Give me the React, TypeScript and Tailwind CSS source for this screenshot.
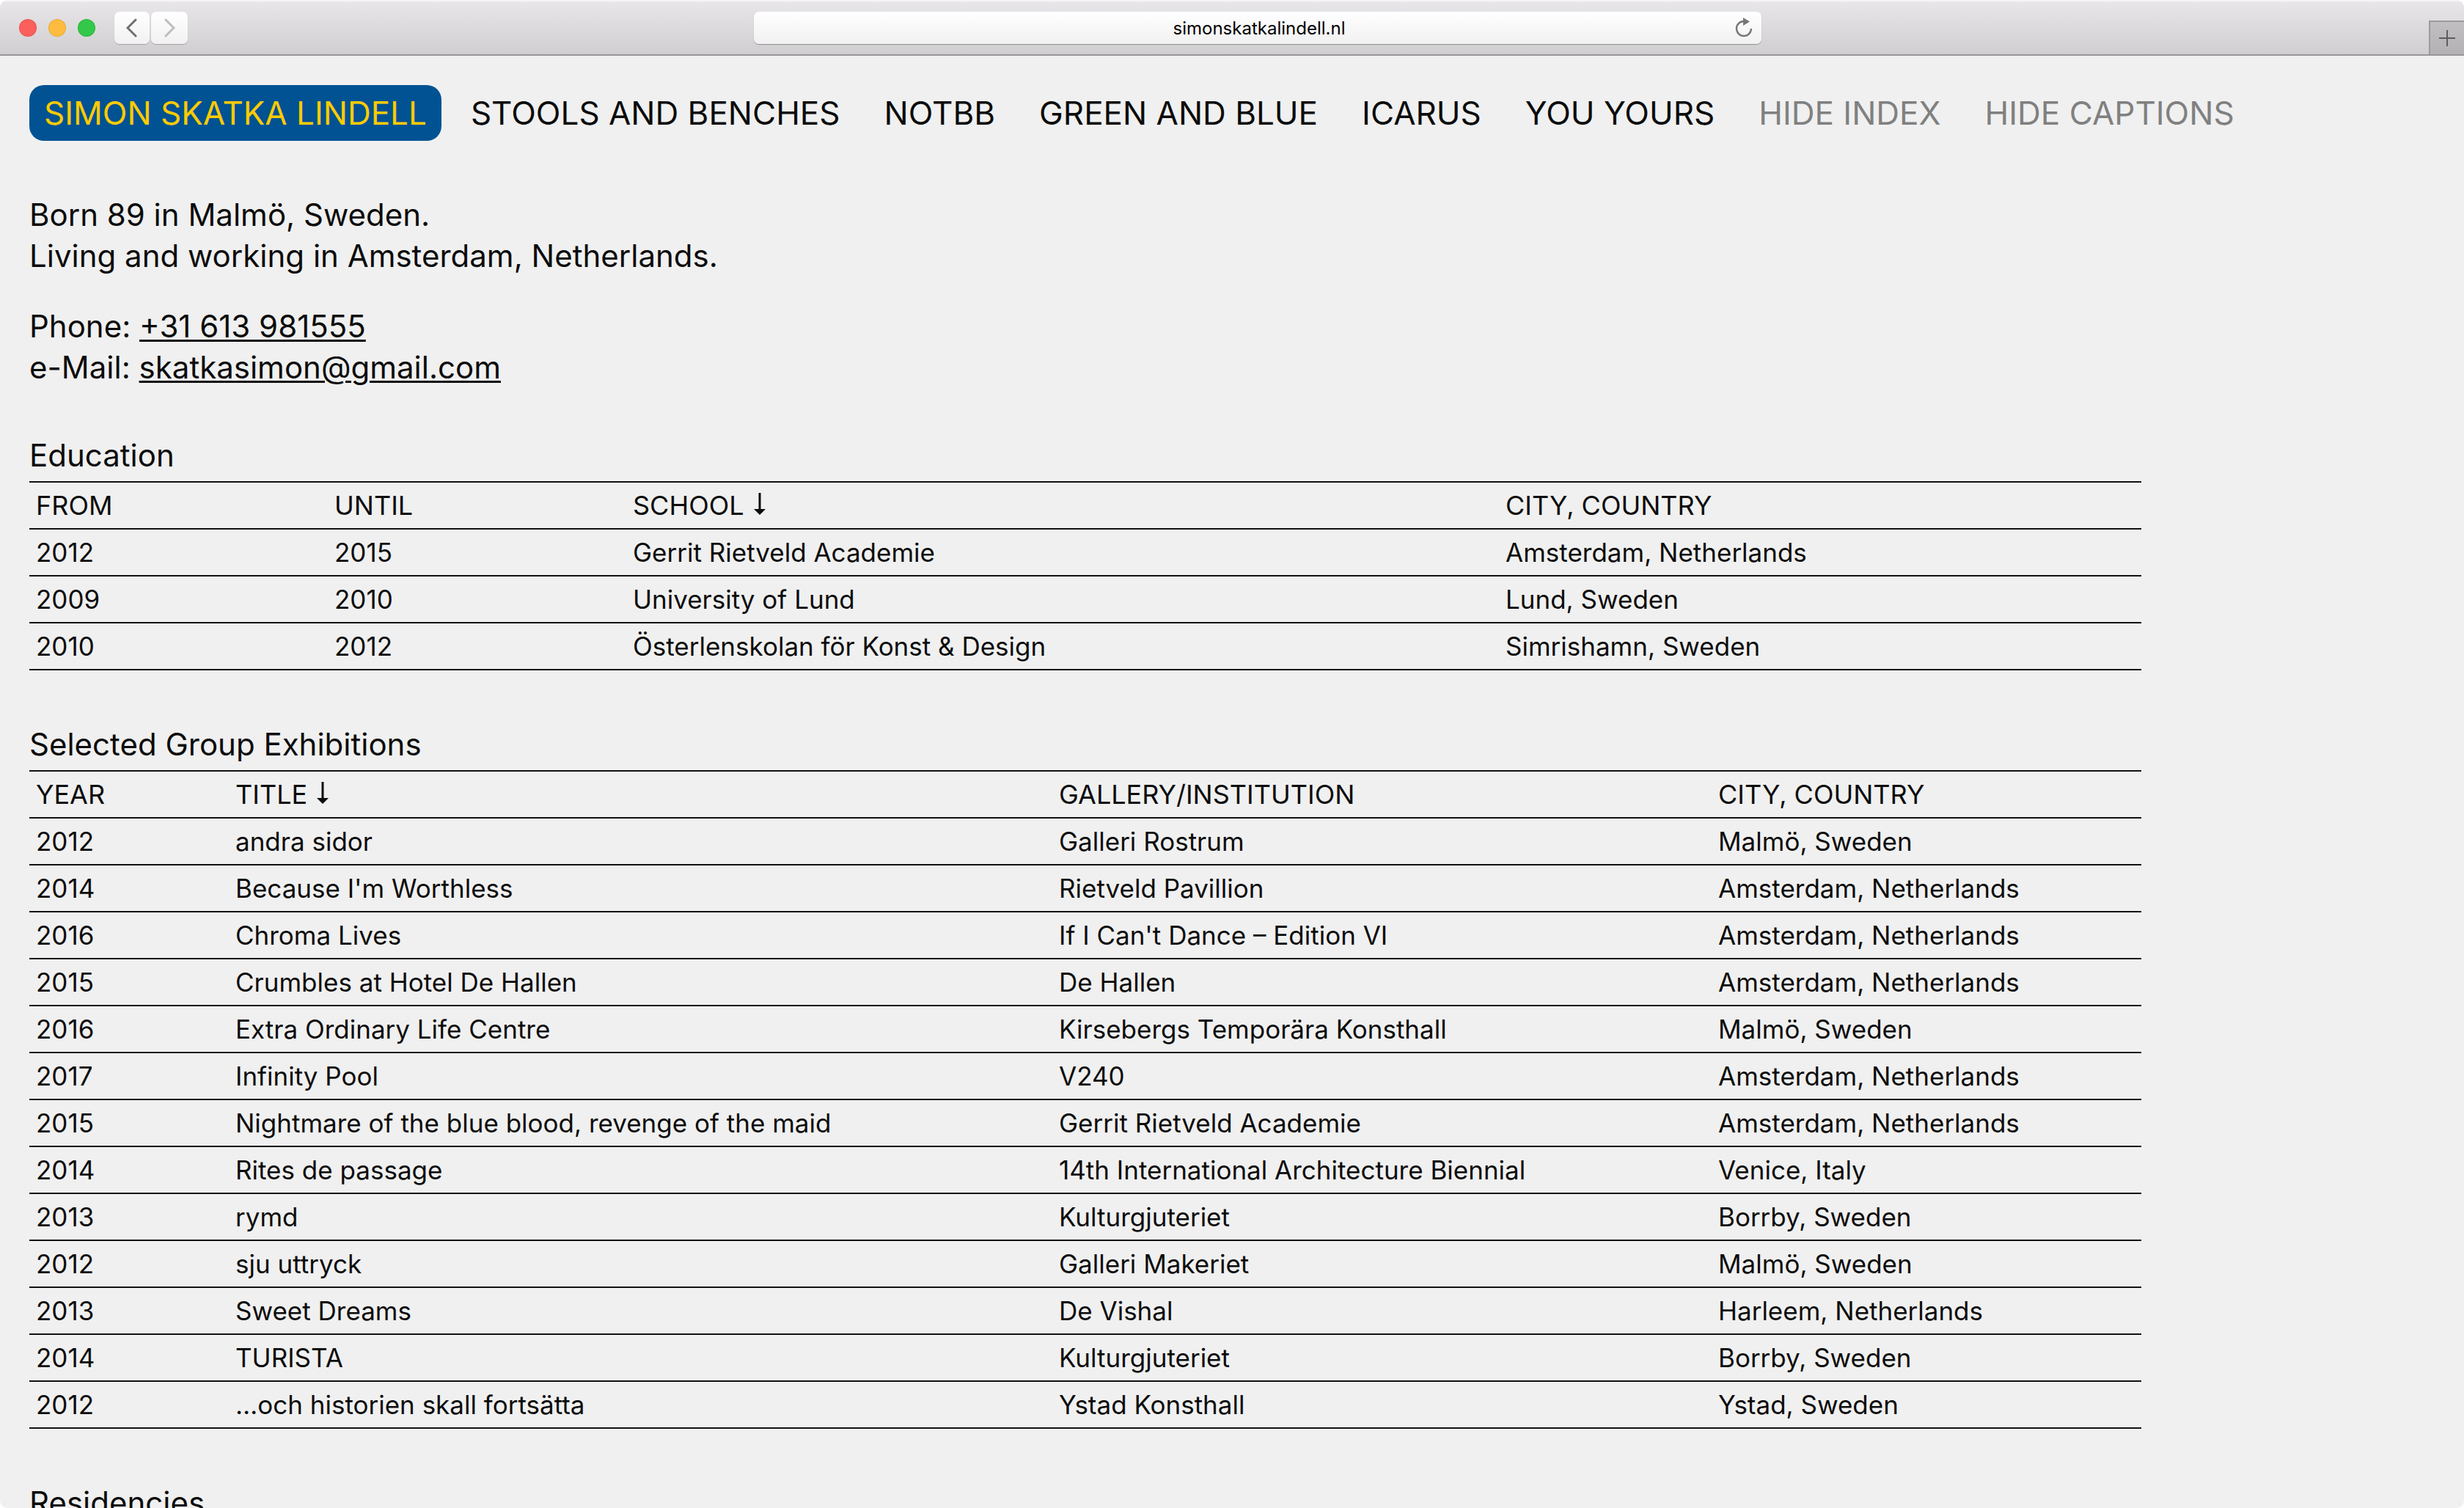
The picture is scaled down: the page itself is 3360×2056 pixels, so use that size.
import React from "react";

const nav = ["STOOLS AND BENCHES", "NOTBB", "GREEN AND BLUE", "ICARUS", "YOU YOURS"];
const toggles = ["HIDE INDEX", "HIDE CAPTIONS"];

const education = [
  ["2012", "2015", "Gerrit Rietveld Academie", "Amsterdam, Netherlands"],
  ["2009", "2010", "University of Lund", "Lund, Sweden"],
  ["2010", "2012", "Österlenskolan för Konst & Design", "Simrishamn, Sweden"],
];

const exhibitions = [
  ["2012", "andra sidor", "Galleri Rostrum", "Malmö, Sweden"],
  ["2014", "Because I'm Worthless", "Rietveld Pavillion", "Amsterdam, Netherlands"],
  ["2016", "Chroma Lives", "If I Can't Dance – Edition VI", "Amsterdam, Netherlands"],
  ["2015", "Crumbles at Hotel De Hallen", "De Hallen", "Amsterdam, Netherlands"],
  ["2016", "Extra Ordinary Life Centre", "Kirsebergs Temporära Konsthall", "Malmö, Sweden"],
  ["2017", "Infinity Pool", "V240", "Amsterdam, Netherlands"],
  ["2015", "Nightmare of the blue blood, revenge of the maid", "Gerrit Rietveld Academie", "Amsterdam, Netherlands"],
  ["2014", "Rites de passage", "14th International Architecture Biennial", "Venice, Italy"],
  ["2013", "rymd", "Kulturgjuteriet", "Borrby, Sweden"],
  ["2012", "sju uttryck", "Galleri Makeriet", "Malmö, Sweden"],
  ["2013", "Sweet Dreams", "De Vishal", "Harleem, Netherlands"],
  ["2014", "TURISTA", "Kulturgjuteriet", "Borrby, Sweden"],
  ["2012", "…och historien skall fortsätta", "Ystad Konsthall", "Ystad, Sweden"],
];

function BrowserBar() {
  return (
    <header className="grid h-[76px] grid-cols-[1028fr_1374px_958fr] items-center border-b-2 border-[#989698] bg-linear-to-b from-[#e9e7ea] to-[#d0ced0] pt-[2px] shadow-[inset_0_2px_0_#f5f4f5]">
      <div className="flex items-center pl-[26px]">
        <div className="flex gap-4">
          <button aria-label="Close" className="size-6 rounded-full border border-[#e0443e]/60 bg-[#fc605c]" />
          <button aria-label="Minimize" className="size-6 rounded-full border border-[#dea123]/60 bg-[#fdbc40]" />
          <button aria-label="Zoom" className="size-6 rounded-full border border-[#1aab29]/60 bg-[#34c84a]" />
        </div>
        <div className="ml-[26px] flex gap-[2px]">
          <button aria-label="Back" className="flex h-11 w-12 items-center justify-center rounded-[7px] bg-linear-to-b from-white to-[#f1f1f1] text-[#6f6f6f] shadow-[0_1px_1px_#a3a1a3]">
            <svg width="16" height="26" viewBox="0 0 16 26" fill="none" stroke="currentColor" strokeWidth="3" strokeLinecap="round"><path d="M13 2 2 13l11 11" /></svg>
          </button>
          <button aria-label="Forward" className="flex h-11 w-[50px] items-center justify-center rounded-[7px] bg-linear-to-b from-white to-[#f1f1f1] text-[#bdbdbd] shadow-[0_1px_1px_#a3a1a3]">
            <svg width="16" height="26" viewBox="0 0 16 26" fill="none" stroke="currentColor" strokeWidth="3" strokeLinecap="round"><path d="m3 2 11 11L3 24" /></svg>
          </button>
        </div>
      </div>
      <div className="flex h-11 items-center rounded-[7px] bg-linear-to-b from-white to-[#f1f1f1] pr-3 pl-10 shadow-[0_1px_1px_#8f8d8f]">
        <input aria-label="Address" defaultValue="simonskatkalindell.nl" className="min-w-0 flex-1 bg-transparent pt-[2px] text-center font-[Inter,sans-serif] text-[24px] leading-8 text-black outline-none" />
        <button aria-label="Reload" className="text-[#777]">
          <svg width="24" height="28" viewBox="0 0 24 28" fill="none" stroke="currentColor" strokeWidth="2.4"><path d="M12 5a10 10 0 1 0 10 10" /><path d="M11 0v11l9-5.5z" fill="currentColor" stroke="none" /></svg>
        </button>
      </div>
      <div className="flex justify-end self-end">
        <button aria-label="New tab" className="flex h-[46px] w-12 items-center justify-center border-t-2 border-l-2 border-[#9c9a9c] bg-linear-to-b from-[#c1bfc1] to-[#b3b1b3] text-[#5d5d5d]">
          <svg width="22" height="22" viewBox="0 0 22 22" stroke="currentColor" strokeWidth="2"><path d="M11 0v22M0 11h22" /></svg>
        </button>
      </div>
    </header>
  );
}

function SortArrow() {
  return (
    <svg className="ml-3 inline-block align-baseline" width="18" height="30" viewBox="0 0 18 30" aria-label="sorted">
      <path d="M9 0v24" stroke="currentColor" strokeWidth="3" />
      <path d="M1 22h16L9 30z" fill="currentColor" />
    </svg>
  );
}

function Listing({ title, heads, sorted, widths, rows }: { title: string; heads: string[]; sorted: number; widths: string[]; rows: string[][] }) {
  return (
    <table className="mb-[73px] w-full table-fixed border-collapse text-left text-[35px] leading-[46px]">
      <caption className="h-[63px] text-left text-[42px] leading-[56px]">{title}</caption>
      <colgroup>{widths.map((w, i) => <col key={i} className={w} />)}</colgroup>
      <thead>
        <tr className="h-16 border-y-2 border-[#111] text-[36px]">
          {heads.map((h, i) => (
            <th key={h} scope="col" className="px-[9px] py-0 font-normal">
              {i === sorted ? <button>{h}<SortArrow /></button> : h}
            </th>
          ))}
        </tr>
      </thead>
      <tbody>
        {rows.map((r, i) => (
          <tr key={i} className="h-16 border-b-2 border-[#111]">
            {r.map((c, j) => <td key={j} className="px-[9px] py-0 whitespace-nowrap">{c}</td>)}
          </tr>
        ))}
      </tbody>
    </table>
  );
}

export default function App() {
  return (
    <div className="bg-white">
      <div className="h-screen overflow-hidden rounded-[10px] bg-[#f0f0f0] font-[Inter,sans-serif] text-[#0c0c0c]">
        <BrowserBar />
        <nav className="flex items-center gap-[60px] px-10 pt-10 text-[44px] leading-[76px] whitespace-nowrap">
          <a href="#" className="-mr-5 rounded-[20px] bg-[#005293] px-5 text-[#fecb00]">SIMON SKATKA LINDELL</a>
          {nav.map((n) => <a key={n} href="#">{n}</a>)}
          {toggles.map((n) => <button key={n} className="text-[#808080]">{n}</button>)}
        </nav>
        <main className="w-10/12 pt-[73px] pl-10">
          <div className="text-[42px] leading-[56px]">
            <p>Born 89 in Malmö, Sweden.<br />Living and working in Amsterdam, Netherlands.</p>
            <p className="mt-10">
              Phone: <a href="tel:+31613981555" className="underline decoration-[3px] underline-offset-[3px]">+31 613 981555</a><br />
              e-Mail: <a href="mailto:skatkasimon@gmail.com" className="underline decoration-[3px] underline-offset-[3px]">skatkasimon@gmail.com</a>
            </p>
          </div>
          <div className="mt-16">
            <Listing title="Education" heads={["FROM", "UNTIL", "SCHOOL", "CITY, COUNTRY"]} sorted={2} widths={["w-[407px]", "w-[407px]", "w-[1190px]", "w-[876px]"]} rows={education} />
            <Listing title="Selected Group Exhibitions" heads={["YEAR", "TITLE", "GALLERY/INSTITUTION", "CITY, COUNTRY"]} sorted={1} widths={["w-[272px]", "w-[1123px]", "w-[899px]", "w-[586px]"]} rows={exhibitions} />
            <Listing title="Residencies" heads={[]} sorted={0} widths={[]} rows={[]} />
          </div>
        </main>
      </div>
    </div>
  );
}
